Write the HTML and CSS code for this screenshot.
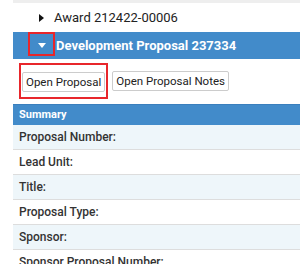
FILE: index.html
```html
<!DOCTYPE html>
<html lang="en">
<head>
    <meta charset="UTF-8">
    <meta name="viewport" content="width=device-width, initial-scale=1.0">
    <title>Development Proposal 237334</title>
    <link rel="stylesheet" href="styles.css">
</head>
<body>

<div class="page">
    <div class="tree">
        <div class="node node-award">
            <span class="caret caret-right"></span>
            <span class="node-label">Award 212422-00006</span>
        </div>
        <div class="node node-open">
            <span class="caret-box"><span class="caret caret-down"></span></span>
            <span class="node-label">Development Proposal 237334</span>
        </div>
    </div>

    <div class="actions">
        <span class="highlight">
            <button class="action-button">Open Proposal</button>
        </span>
        <button class="action-button">Open Proposal Notes</button>
    </div>

    <div class="summary">
        <div class="summary-header">Summary</div>
        <div class="summary-row">Proposal Number:</div>
        <div class="summary-row">Lead Unit:</div>
        <div class="summary-row">Title:</div>
        <div class="summary-row">Proposal Type:</div>
        <div class="summary-row">Sponsor:</div>
        <div class="summary-row">Sponsor Proposal Number:</div>
    </div>
</div>

</body>
</html>
```

FILE: styles.css
```css
body {
    margin: 0;
    font-family: Roboto, 'Noto Sans', sans-serif;
    color: #333;
    background-color: #fff;
    overflow: hidden;
}

.page {
    padding-left: 13px;
    width: 300px;
    box-sizing: border-box;
}

.tree {
    border-top: 3px solid #eeeeee;
}

.node {
    display: flex;
    align-items: center;
}

.node-award {
    height: 29px;
    padding-left: 26px;
    font-size: 13px;
    color: #222;
}

.node-award .caret {
    margin-right: 10px;
}

.node-open {
    height: 27px;
    padding-left: 15px;
    background-color: #428bca;
    color: #fff;
    font-size: 13px;
    font-weight: bold;
    align-items: flex-start;
}

.node-open .node-label {
    line-height: 27px;
    margin-left: 1px;
    white-space: nowrap;
}

.caret-box {
    width: 23px;
    height: 20px;
    border: 2px solid #e8262b;
    display: flex;
    align-items: center;
    justify-content: center;
}

.caret {
    display: inline-block;
    width: 0;
    height: 0;
}

.caret-right {
    border-top: 4px solid transparent;
    border-bottom: 4px solid transparent;
    border-left: 5px solid #111;
}

.caret-down {
    border-left: 4.5px solid transparent;
    border-right: 4.5px solid transparent;
    border-top: 5px solid #fff;
    margin-top: 3px;
}

.actions {
    display: flex;
    align-items: center;
    gap: 4px;
    padding: 4px 0 5px 6px;
}

.highlight {
    display: flex;
    padding: 7px 1px 5px 1px;
    border: 2px solid #e8262b;
}

.action-button {
    font-family: Roboto, 'Noto Sans', sans-serif;
    font-size: 11.5px;
    color: #222;
    background-color: #fff;
    border: 1px solid #cccccc;
    border-radius: 2px;
    height: 20px;
    padding: 0 3px;
    margin: 0;
}

.summary-header {
    background-color: #428bca;
    border-top: 1px solid #3a7fbd;
    color: #fff;
    font-size: 11px;
    font-weight: bold;
    height: 20px;
    line-height: 20px;
    padding-left: 6px;
}

.summary-row {
    height: 24px;
    line-height: 24px;
    padding-left: 6px;
    font-size: 12px;
    font-weight: 500;
    color: #333;
    border-bottom: 1px solid #dddddd;
    white-space: nowrap;
}

.summary-row:nth-child(even) {
    background-color: #eef6fa;
}
```
